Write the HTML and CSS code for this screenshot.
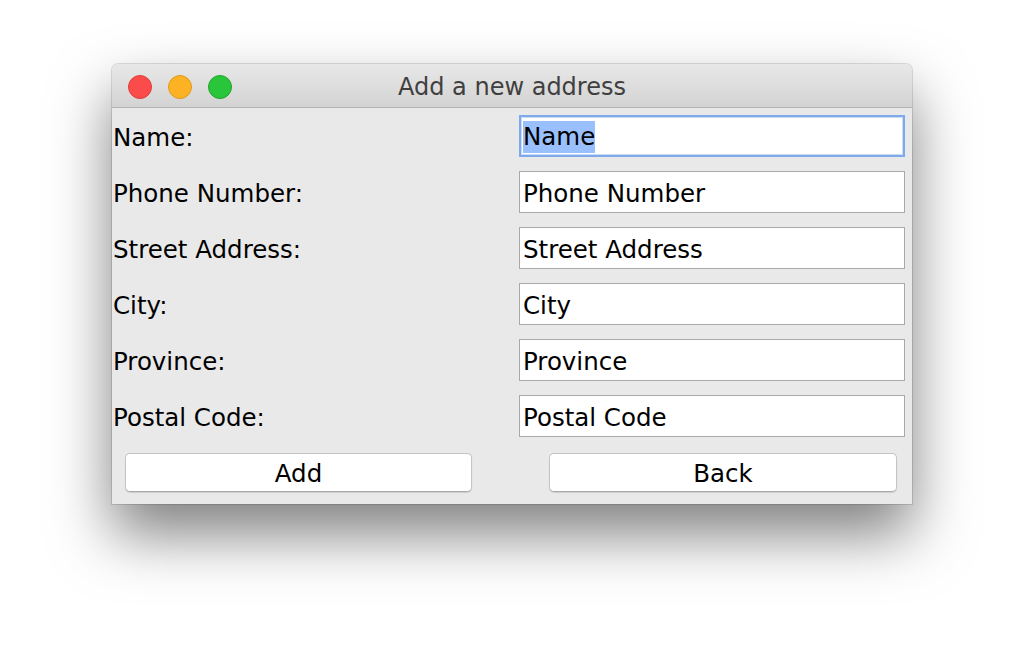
FILE: index.html
```html
<!DOCTYPE html>
<html>
<head>
<meta charset="utf-8">
<link rel="stylesheet" href="styles.css">
</head>
<body>
<div class="window">
  <div class="titlebar">
    <div class="lights">
      <span class="light red"></span>
      <span class="light yellow"></span>
      <span class="light green"></span>
    </div>
    <div class="title">Add a new address</div>
  </div>
  <div class="content">
    <div class="form">
      <div class="label">Name:</div>
      <div class="cell"><div class="field focused"><span class="sel">Name</span></div></div>
      <div class="label">Phone Number:</div>
      <div class="cell"><div class="field">Phone Number</div></div>
      <div class="label">Street Address:</div>
      <div class="cell"><div class="field">Street Address</div></div>
      <div class="label">City:</div>
      <div class="cell"><div class="field">City</div></div>
      <div class="label">Province:</div>
      <div class="cell"><div class="field">Province</div></div>
      <div class="label">Postal Code:</div>
      <div class="cell"><div class="field">Postal Code</div></div>
    </div>
    <div class="buttons">
      <div class="btn-cell left"><button class="btn">Add</button></div>
      <div class="btn-cell right"><button class="btn">Back</button></div>
    </div>
  </div>
</div>
</body>
</html>
```
FILE: styles.css
```css
html, body {
  margin: 0;
  padding: 0;
  background: #ffffff;
}
body {
  box-sizing: border-box;
  min-height: 664px;
  padding: 64px 0 0 112px;
  font-family: "DejaVu Sans", "Noto Sans", sans-serif;
}
.window {
  width: 800px;
  height: 440px;
  border-radius: 6px 6px 0 0;
  box-shadow: 0 30px 60px rgba(0, 0, 0, 0.5), 0 0 0 1px rgba(0, 0, 0, 0.12);
  display: flex;
  flex-direction: column;
  overflow: hidden;
  background: #e9e9e9;
}
.titlebar {
  height: 43px;
  flex: none;
  position: relative;
  background: linear-gradient(#e8e8e8, #d3d3d3);
  border-bottom: 1px solid #b3b3b3;
  display: flex;
  align-items: center;
  justify-content: center;
}
.lights {
  position: absolute;
  left: 16px;
  top: 11px;
  display: flex;
  gap: 16px;
}
.light {
  width: 22px;
  height: 22px;
  border-radius: 50%;
  display: block;
}
.red { background: #fc4b4b; border: 1px solid #de3e3a; }
.yellow { background: #fdb224; border: 1px solid #dd9a20; }
.green { background: #29c53b; border: 1px solid #20a42d; }
.title {
  font-size: 24px;
  color: #3f3f3f;
  margin-top: 2px;
}
.content {
  flex: 1;
  display: flex;
  flex-direction: column;
}
.form {
  display: grid;
  grid-template-columns: 400px 400px;
  grid-auto-rows: 56px;
}
.label {
  font-size: 24.5px;
  color: #000;
  display: flex;
  align-items: center;
  padding-left: 1px;
  padding-top: 3px;
}
.cell {
  padding: 7px;
}
.field {
  height: 42px;
  box-sizing: border-box;
  background: #fff;
  border: 1px solid #aaaaaa;
  font-size: 24.5px;
  color: #000;
  display: flex;
  align-items: center;
  padding-left: 3px;
  padding-top: 3px;
}
.field.focused {
  border: 2px solid #7fa9ea;
  padding-left: 2px;
  padding-top: 2px;
  box-shadow: inset 0 0 0 1px #c9dcf6;
}
.sel {
  background: #99c0fc;
  line-height: 32px;
}
.buttons {
  display: grid;
  grid-template-columns: 400px 400px;
  padding-top: 9px;
}
.btn-cell.left { padding: 0 40px 0 13px; }
.btn-cell.right { padding: 0 15px 0 37px; }
.btn {
  width: 100%;
  height: 39px;
  background: #fff;
  border: 1px solid #c4c4c4;
  border-bottom-color: #a9a9a9;
  border-radius: 5px;
  box-shadow: 0 1px 1px rgba(0, 0, 0, 0.12);
  font-family: "DejaVu Sans", "Noto Sans", sans-serif;
  font-size: 24.5px;
  color: #000;
  padding: 2px 0 0;
}
```
